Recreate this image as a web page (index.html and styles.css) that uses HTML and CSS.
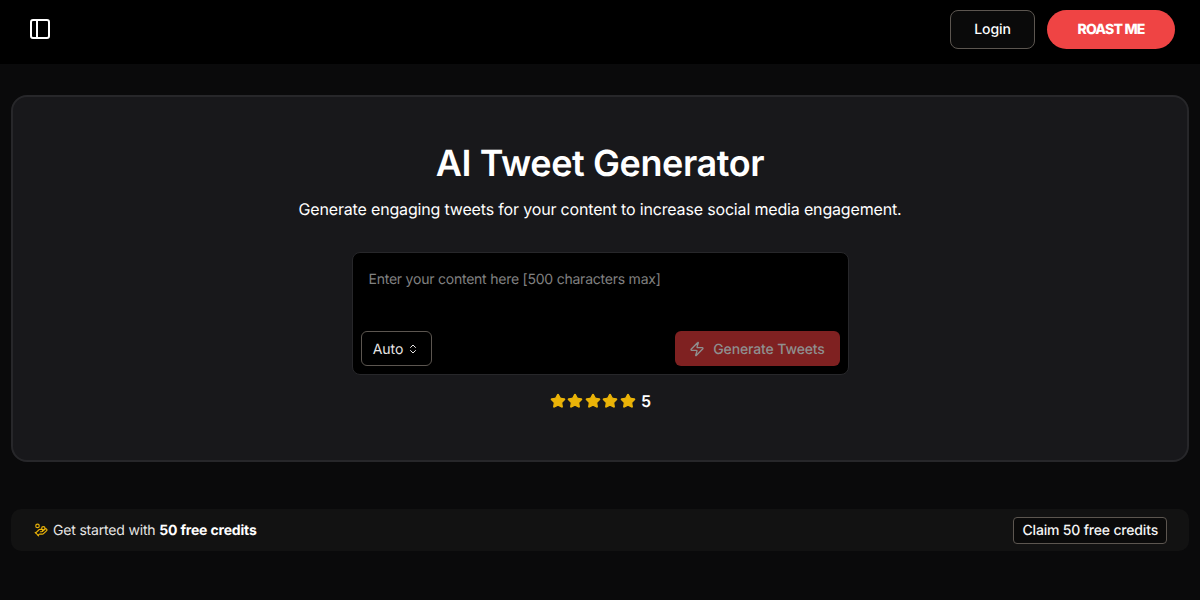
FILE: index.html
```html
<!DOCTYPE html>
<html lang="en">
<head>
<meta charset="utf-8">
<title>AI Tweet Generator</title>
<link rel="stylesheet" href="styles.css">
</head>
<body>
<header class="topbar">
  <button class="icon-btn" aria-label="Toggle sidebar">
    <svg width="24" height="24" viewBox="0 0 24 24" fill="none" stroke="#fff" stroke-width="2" stroke-linecap="round" stroke-linejoin="round"><rect x="3" y="3" width="18" height="18" rx="2"/><path d="M9 3v18"/></svg>
  </button>
  <div class="top-actions">
    <button class="login">Login</button>
    <button class="roast">ROAST ME</button>
  </div>
</header>
<main class="main">
  <section class="hero">
    <h1>AI Tweet Generator</h1>
    <p class="sub">Generate engaging tweets for your content to increase social media engagement.</p>
    <div class="composer">
      <div class="placeholder">Enter your content here [500 characters max]</div>
      <div class="composer-row">
        <button class="auto">Auto
          <svg width="12" height="12" viewBox="0 0 24 24" fill="none" stroke="currentColor" stroke-width="2" stroke-linecap="round" stroke-linejoin="round"><path d="m7 15 5 5 5-5"/><path d="m7 9 5-5 5 5"/></svg>
        </button>
        <button class="generate">
          <svg width="16" height="16" viewBox="0 0 24 24" fill="none" stroke="currentColor" stroke-width="2" stroke-linecap="round" stroke-linejoin="round"><path d="M4 14a1 1 0 0 1-.78-1.63l9.9-10.2a.5.5 0 0 1 .86.46l-1.92 6.02A1 1 0 0 0 13 10h7a1 1 0 0 1 .78 1.63l-9.9 10.2a.5.5 0 0 1-.86-.46l1.92-6.02A1 1 0 0 0 11 14z"/></svg>
          Generate Tweets
        </button>
      </div>
    </div>
    <div class="rating">
      <span class="stars">
        <svg width="16" height="16" viewBox="0 0 24 24"><path class="star" d="M11.525 2.295a.53.53 0 0 1 .95 0l2.31 4.679a2.123 2.123 0 0 0 1.595 1.16l5.166.756a.53.53 0 0 1 .294.904l-3.736 3.638a2.123 2.123 0 0 0-.611 1.878l.882 5.14a.53.53 0 0 1-.771.56l-4.618-2.428a2.122 2.122 0 0 0-1.973 0L6.396 21.01a.53.53 0 0 1-.77-.56l.881-5.139a2.122 2.122 0 0 0-.611-1.879L2.16 9.795a.53.53 0 0 1 .294-.906l5.165-.755a2.122 2.122 0 0 0 1.597-1.16z"/></svg>
        <svg width="16" height="16" viewBox="0 0 24 24"><path class="star" d="M11.525 2.295a.53.53 0 0 1 .95 0l2.31 4.679a2.123 2.123 0 0 0 1.595 1.16l5.166.756a.53.53 0 0 1 .294.904l-3.736 3.638a2.123 2.123 0 0 0-.611 1.878l.882 5.14a.53.53 0 0 1-.771.56l-4.618-2.428a2.122 2.122 0 0 0-1.973 0L6.396 21.01a.53.53 0 0 1-.77-.56l.881-5.139a2.122 2.122 0 0 0-.611-1.879L2.16 9.795a.53.53 0 0 1 .294-.906l5.165-.755a2.122 2.122 0 0 0 1.597-1.16z"/></svg>
        <svg width="16" height="16" viewBox="0 0 24 24"><path class="star" d="M11.525 2.295a.53.53 0 0 1 .95 0l2.31 4.679a2.123 2.123 0 0 0 1.595 1.16l5.166.756a.53.53 0 0 1 .294.904l-3.736 3.638a2.123 2.123 0 0 0-.611 1.878l.882 5.14a.53.53 0 0 1-.771.56l-4.618-2.428a2.122 2.122 0 0 0-1.973 0L6.396 21.01a.53.53 0 0 1-.77-.56l.881-5.139a2.122 2.122 0 0 0-.611-1.879L2.16 9.795a.53.53 0 0 1 .294-.906l5.165-.755a2.122 2.122 0 0 0 1.597-1.16z"/></svg>
        <svg width="16" height="16" viewBox="0 0 24 24"><path class="star" d="M11.525 2.295a.53.53 0 0 1 .95 0l2.31 4.679a2.123 2.123 0 0 0 1.595 1.16l5.166.756a.53.53 0 0 1 .294.904l-3.736 3.638a2.123 2.123 0 0 0-.611 1.878l.882 5.14a.53.53 0 0 1-.771.56l-4.618-2.428a2.122 2.122 0 0 0-1.973 0L6.396 21.01a.53.53 0 0 1-.77-.56l.881-5.139a2.122 2.122 0 0 0-.611-1.879L2.16 9.795a.53.53 0 0 1 .294-.906l5.165-.755a2.122 2.122 0 0 0 1.597-1.16z"/></svg>
        <svg width="16" height="16" viewBox="0 0 24 24"><path class="star" d="M11.525 2.295a.53.53 0 0 1 .95 0l2.31 4.679a2.123 2.123 0 0 0 1.595 1.16l5.166.756a.53.53 0 0 1 .294.904l-3.736 3.638a2.123 2.123 0 0 0-.611 1.878l.882 5.14a.53.53 0 0 1-.771.56l-4.618-2.428a2.122 2.122 0 0 0-1.973 0L6.396 21.01a.53.53 0 0 1-.77-.56l.881-5.139a2.122 2.122 0 0 0-.611-1.879L2.16 9.795a.53.53 0 0 1 .294-.906l5.165-.755a2.122 2.122 0 0 0 1.597-1.16z"/></svg>
      </span>
      <span class="score">5</span>
    </div>
  </section>
  <section class="promo">
    <div class="promo-text">
      <svg width="14" height="14" viewBox="0 0 24 24" fill="none" stroke="#eab308" stroke-width="2" stroke-linecap="round" stroke-linejoin="round"><path d="M11 15h2a2 2 0 1 0 0-4h-3c-.6 0-1.100.2-1.400.6L3 17"/><path d="m7 21 1.600-1.400c.3-.4.8-.6 1.400-.6h4c1.100 0 2.100-.4 2.800-1.200l4.600-4.400a2 2 0 0 0-2.750-2.910l-4.200 3.900"/><path d="m2 16 6 6"/><circle cx="16" cy="9" r="2.900"/><circle cx="6" cy="5" r="3"/></svg>
      <span>Get started with <strong>50 free credits</strong></span>
    </div>
    <button class="claim">Claim 50 free credits</button>
  </section>
</main>
</body>
</html>
```
FILE: styles.css
```css
* { box-sizing: border-box; }
html, body { margin: 0; height: 100%; }
body {
  background: #0a0a0b;
  color: #fff;
  font-family: Inter, "Liberation Sans", sans-serif;
  text-rendering: geometricPrecision;
  overflow: hidden;
}
button { font-family: inherit; cursor: pointer; text-rendering: geometricPrecision; }
.topbar {
  height: 64px;
  background: #000;
  display: flex;
  align-items: flex-start;
  justify-content: space-between;
  padding: 10px 25px 0 28px;
}
.icon-btn {
  background: none;
  border: 0;
  padding: 0;
  margin-top: 7px;
  width: 24px;
  height: 24px;
  display: flex;
}
.top-actions { display: flex; align-items: center; gap: 12px; }
.login {
  width: 85px;
  height: 39px;
  background: #0a0a0a;
  border: 1px solid #5c5650;
  border-radius: 8px;
  color: #fff;
  font-size: 14px;
  font-weight: 500;
  letter-spacing: -0.1px;
}
.roast {
  width: 128px;
  height: 39px;
  background: #ef4444;
  border: 0;
  border-radius: 20px;
  color: #fff;
  font-size: 14px;
  font-weight: 800;
  letter-spacing: -0.8px;
}
.main { padding: 31px 11px 0; }
.hero {
  height: 367px;
  background: #18181b;
  border: 2px solid #27272a;
  border-radius: 16px;
  display: flex;
  flex-direction: column;
  align-items: center;
  padding-top: 44px;
}
h1 {
  margin: 0;
  font-size: 36px;
  line-height: 44px;
  font-weight: 600;
  letter-spacing: -0.4px;
}
.sub {
  margin: 12px 0 0;
  font-size: 16px;
  line-height: 24px;
  letter-spacing: -0.167px;
}
.composer {
  width: 497px;
  height: 123px;
  margin-top: 31px;
  background: #000;
  border: 1px solid #27272a;
  border-radius: 8px;
  padding: 17px 8px 8px;
  display: flex;
  flex-direction: column;
  justify-content: space-between;
}
.placeholder {
  padding-left: 8px;
  font-size: 14px;
  line-height: 20px;
  color: #808080;
  letter-spacing: -0.23px;
}
.composer-row { display: flex; justify-content: space-between; align-items: center; }
.auto {
  width: 71px;
  height: 35px;
  display: flex;
  align-items: center;
  justify-content: center;
  gap: 4px;
  padding: 1px 0 0;
  background: #000;
  border: 1px solid #5c5650;
  border-radius: 6px;
  color: #e7e5e4;
  font-size: 14px;
  letter-spacing: -0.1px;
}
.generate {
  width: 165px;
  height: 35px;
  display: flex;
  align-items: center;
  justify-content: center;
  gap: 8px;
  padding: 1px 0 0;
  background: #7f2121;
  border: 0;
  border-radius: 6px;
  color: #8f8f8f;
  font-size: 14px;
  font-weight: 500;
  letter-spacing: -0.13px;
}
.rating {
  display: flex;
  align-items: center;
  gap: 5px;
  margin-top: 16px;
  padding-left: 1px;
}
.stars { display: flex; gap: 1.500px; }
.star { fill: #eab308; stroke: #eab308; stroke-width: 2; stroke-linejoin: round; }
.score { font-size: 16px; font-weight: 600; }
.promo {
  height: 42px;
  margin-top: 47px;
  background: #121212;
  border-radius: 10px;
  display: flex;
  align-items: center;
  justify-content: space-between;
  padding: 0 22px 0 23px;
}
.promo-text {
  display: flex;
  align-items: center;
  gap: 5px;
  font-size: 14px;
  color: #e7e5e4;
  letter-spacing: -0.18px;
}
.promo-text strong { color: #fff; font-weight: 700; }
.claim {
  height: 27px;
  padding: 0 8px;
  background: #0a0a0a;
  border: 1px solid #5c5650;
  border-radius: 4px;
  color: #f5f5f5;
  font-size: 14px;
  font-weight: 500;
  letter-spacing: -0.18px;
}
```
